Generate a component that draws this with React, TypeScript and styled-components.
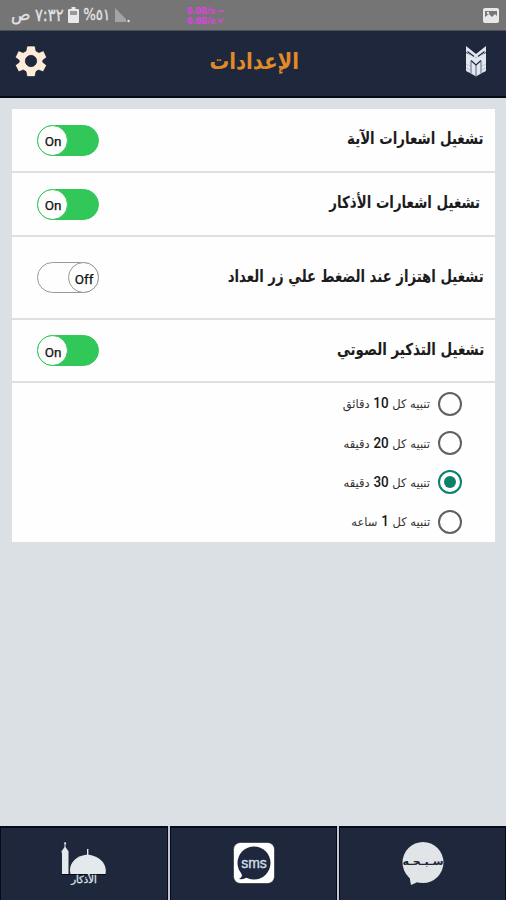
import React from "react";
import styled, { createGlobalStyle } from "styled-components";

const Global = createGlobalStyle`
  * { box-sizing: border-box; }
  body { margin: 0; background: #dae0e3; }
`;

const arabic = `"DejaVu Sans", "Noto Sans", sans-serif`;

const Screen = styled.div`
  width: 506px;
  height: 900px;
  display: flex;
  flex-direction: column;
  background: #dae0e3;
  font-family: ${arabic};
  overflow: hidden;
`;

const StatusBar = styled.div`
  height: 31px;
  flex: none;
  display: flex;
  align-items: center;
  background: #757575;
  border-bottom: 1px solid #4a505c;
  padding: 0 7px 0 11px;
  color: #e4e4e4;
`;

const StatusText = styled.span<{ $w: number; $size: number }>`
  width: ${(p) => p.$w}px;
  flex: none;
  font-size: ${(p) => p.$size}px;
  line-height: 30px;
  white-space: nowrap;
  -webkit-text-stroke: 0.3px #e4e4e4;
`;

const StatusIcon = styled.svg`
  flex: none;
  display: block;
`;

const Speed = styled.div`
  margin-left: 57px;
  margin-right: auto;
  padding-top: 2px;
  display: flex;
  flex-direction: column;
  font: bold 9.5px/10.5px Roboto, sans-serif;
  color: #e83be8;
  white-space: nowrap;
`;

const Header = styled.header`
  height: 67px;
  flex: none;
  display: grid;
  grid-template-columns: 62px 1fr 60px;
  align-items: center;
  justify-items: center;
  background: #1e273b;
  border-bottom: 2px solid #060b18;
  padding-bottom: 5px;
`;

const Squeeze = styled.span<{ $x?: number; $origin?: string }>`
  display: inline-block;
  white-space: nowrap;
  transform: scaleX(${(p) => p.$x ?? 1});
  transform-origin: ${(p) => p.$origin ?? "right"} center;
`;

const Title = styled.h1`
  margin: 0;
  font: bold 22.5px/30px ${arabic};
  color: #e08a28;
`;

const Card = styled.main`
  margin: 11px 11px 0 12px;
  width: 483px;
  height: 433px;
  flex: none;
  display: flex;
  flex-direction: column;
  background: #fefefe;
`;

const Row = styled.div<{ $h: number; $end: number }>`
  height: ${(p) => p.$h}px;
  flex: none;
  display: flex;
  align-items: center;
  justify-content: space-between;
  padding: 0 ${(p) => p.$end}px 0 25px;
  border-bottom: 2px solid #dde0e1;
`;

const Label = styled.span`
  padding-bottom: 2px;
  font: bold 16.5px/24px ${arabic};
  color: #1c1c1c;
`;

const Track = styled.div<{ $on: boolean }>`
  width: 62px;
  height: 31px;
  flex: none;
  display: flex;
  justify-content: ${(p) => (p.$on ? "flex-start" : "flex-end")};
  border-radius: 16px;
  background: ${(p) => (p.$on ? "#32c859" : "#fefefe")};
  border: 1px solid ${(p) => (p.$on ? "#32c859" : "#999")};
`;

const Knob = styled.div<{ $on: boolean }>`
  width: 31px;
  height: 31px;
  margin: -1px ${(p) => (p.$on ? 0 : -1)}px 0 ${(p) => (p.$on ? -1 : 0)}px;
  border-radius: 50%;
  background: #fefefe;
  border: 1px solid ${(p) => (p.$on ? "#32c859" : "#999")};
  display: flex;
  align-items: center;
  justify-content: center;
  padding: 2px 0 0 1px;
  font: 400 13.5px/16px Roboto, sans-serif;
  -webkit-text-stroke: 0.25px #111;
  color: #111;
`;

const Options = styled.div`
  flex: 1;
  display: flex;
  flex-direction: column;
  padding: 1px 33px 0 0;
`;

const Option = styled.div`
  height: 39.4px;
  display: flex;
  align-items: center;
  justify-content: flex-end;
  gap: 8px;
`;

const OptionText = styled.span`
  direction: rtl;
  font: 12px/20px ${arabic};
  color: #333;
  b {
    font: 500 14px/20px Roboto, sans-serif;
    color: #161616;
  }
`;

const Radio = styled.span<{ $on: boolean }>`
  width: 24px;
  height: 24px;
  flex: none;
  border-radius: 50%;
  border: 2px solid ${(p) => (p.$on ? "#0a8268" : "#606060")};
  display: flex;
  align-items: center;
  justify-content: center;
  &::after {
    content: "";
    width: 12px;
    height: 12px;
    border-radius: 50%;
    background: ${(p) => (p.$on ? "#0a8268" : "transparent")};
  }
`;

const Nav = styled.nav`
  margin-top: auto;
  height: 74px;
  flex: none;
  display: grid;
  grid-template-columns: 168px 167px 167px;
  gap: 2px;
  background: #c3c6d0;
`;

const NavItem = styled.div`
  display: flex;
  justify-content: center;
  background: #1e273b;
  border: solid #060b18;
  border-width: 2px 1px 0;
  padding-top: 14px;
`;

const MosqueItem = styled.div`
  display: flex;
  flex-direction: column;
  align-items: center;
  color: #dfe4e7;
  font: 10px/9px ${arabic};
  -webkit-text-stroke: 0.3px #dfe4e7;
  svg { display: block; }
`;

const Bubble = styled.svg`
  display: block;
  overflow: visible;
`;

const rows = [
  { text: "تشغيل اشعارات الآية", on: true, h: 64, end: 11, x: 0.81 },
  { text: "تشغيل اشعارات الأذكار", on: true, h: 64, end: 15, x: 0.81 },
  { text: "تشغيل اهتزاز عند الضغط علي زر العداد", on: false, h: 83, end: 11, x: 0.803 },
  { text: "تشغيل التذكير الصوتي", on: true, h: 63, end: 11, x: 0.813 },
];

const options = [
  { n: "10", unit: "دقائق" },
  { n: "20", unit: "دقيقه" },
  { n: "30", unit: "دقيقه" },
  { n: "1", unit: "ساعه" },
];

const Gear = () => (
  <svg width="32" height="32" viewBox="0 0 32 32">
    <path
      fill="#fcebd9"
      stroke="#0a0f1c"
      strokeWidth="0.6"
      fillRule="evenodd"
      d="M12 1h8l1 5 3 1.600 4.600-1.900 3 6.600-3.800 3v2l3.800 3-3.400 6.500-4.700-1.800-2.500 1.600-1 5h-8l-1-5-2.700-1.600-4.600 1.800-3.400-6.500 3.900-3v-2l-3.900-3 3.200-6.600 4.600 1.900 2.900-1.600zM16 10.300a5.700 5.700 0 1 0 0 11.400a5.700 5.700 0 1 0 0-11.400z"
    />
  </svg>
);

const Logo = () => (
  <svg width="22" height="34" viewBox="0 0 22 34">
    <g fill="#e3e8f0">
      <path d="M1 2l10 8L21 2v6l-7 5h-6L1 8z" />
      <path d="M1 9l10 4.500L21 9v18l-5 2.500-5 3-5-3-5-2.500z" />
    </g>
    <path d="M2.500 7.500L9 12.500M19.500 7.500L13 12.500M6 16.500l5 4.500 5-4.500" fill="none" stroke="#1e273b" strokeWidth="1.200" />
    <path d="M6 17v12M16 17v12M11 21v11" fill="none" stroke="#4c566b" strokeWidth="0.900" />
    <path d="M1 20l4 2M1 24l4 2M21 20l-4 2M21 24l-4 2" stroke="#a5acba" strokeWidth="0.600" />
  </svg>
);

export default function App() {
  return (
    <>
      <Global />
      <Screen>
        <StatusBar>
          <StatusText $w={24} $size={16}>ص</StatusText>
          <StatusText $w={33} $size={17}><Squeeze $x={0.86} $origin="left">٧:٣٢</Squeeze></StatusText>
          <StatusIcon width="11" height="16" viewBox="0 0 11 16">
            <path d="M3.500 0h4v2H10q1 0 1 1v12q0 1-1 1H1q-1 0-1-1V3q0-1 1-1h2.500z" fill="#e8e8e8" />
            <path d="M2 4h7v4H2z" fill="#999" />
          </StatusIcon>
          <StatusText $w={35} $size={16}>
            <Squeeze $x={0.83} $origin="left">&nbsp;<bdo dir="ltr">%٥١</bdo></Squeeze>
          </StatusText>
          <StatusIcon width="16" height="15" viewBox="0 0 16 15">
            <path d="M1 0l11 11v3H1z" fill="#a4a4a4" />
            <circle cx="14.500" cy="13" r="1.200" fill="#e4e4e4" />
          </StatusIcon>
          <Speed>
            <span>0.0B/s ~</span>
            <span>0.0B/s ˅</span>
          </Speed>
          <StatusIcon width="16" height="15" viewBox="0 0 16 15">
            <rect width="16" height="15" rx="2" fill="#e8e8e8" />
            <path d="M2 3h12v5l-2-2-3 3-3-3-4 3z" fill="#777" />
            <circle cx="5" cy="5" r="1.200" fill="#e8e8e8" />
          </StatusIcon>
        </StatusBar>

        <Header>
          <Gear />
          <Title dir="rtl"><Squeeze $x={0.875} $origin="center">الإعدادات</Squeeze></Title>
          <Logo />
        </Header>

        <Card>
          {rows.map((r) => (
            <Row key={r.text} $h={r.h} $end={r.end}>
              <Track $on={r.on}><Knob $on={r.on}>{r.on ? "On" : "Off"}</Knob></Track>
              <Label dir="rtl"><Squeeze $x={r.x}>{r.text}</Squeeze></Label>
            </Row>
          ))}
          <Options>
            {options.map((o) => (
              <Option key={o.n}>
                <OptionText><Squeeze $x={0.96}>تنبيه كل <b>{o.n}</b> {o.unit}</Squeeze></OptionText>
                <Radio $on={o.n === "30"} />
              </Option>
            ))}
          </Options>
        </Card>

        <Nav>
          <NavItem>
            <MosqueItem>
              <svg width="46" height="33" viewBox="0 0 46 33">
                <g fill="#e4e9eb">
                  <path d="M1 32V12l-.5-3L1.500 8l2-3V2l-.8-1L4.500 0l.8 1.500-.8.800V5l2 3 1 1L7.500 12v20z" />
                  <path d="M9.500 32C7 22 14 14 26.500 12.500 39 14 46.500 22 44.500 32z" />
                  <path d="M26 7h1.400v7H26z" />
                </g>
                <path d="M1 32.500h44" stroke="#060b18" />
              </svg>
              <Squeeze $origin="center">الأذكار</Squeeze>
            </MosqueItem>
          </NavItem>
          <NavItem>
            <Bubble width="42" height="44" viewBox="0 0 42 44">
              <rect x="0.500" y="0.500" width="41" height="41" rx="7" fill="#fff" stroke="#060b18" strokeWidth="0.500" />
              <path d="M8 29l1 5q-1 2-3 3 6 1 11-4z" fill="#1e273b" />
              <circle cx="21" cy="21" r="16.500" fill="#1e273b" />
              <text x="21" y="25.500" textAnchor="middle" fontFamily="Liberation Sans, sans-serif" fontSize="14" fill="#cfdce6" stroke="#cfdce6" strokeWidth="0.400">sms</text>
            </Bubble>
          </NavItem>
          <NavItem>
            <Bubble width="42" height="44" viewBox="0 0 42 44">
              <path d="M7 32l2 11 9-4z" fill="#e1e5e7" />
              <circle cx="21" cy="20.500" r="20.500" fill="#e1e5e7" />
              <text x="21" y="23" textAnchor="middle" fontFamily="DejaVu Sans, sans-serif" fontWeight="bold" fontSize="11" fill="#1e273b">سـبـحـه</text>
            </Bubble>
          </NavItem>
        </Nav>
      </Screen>
    </>
  );
}
